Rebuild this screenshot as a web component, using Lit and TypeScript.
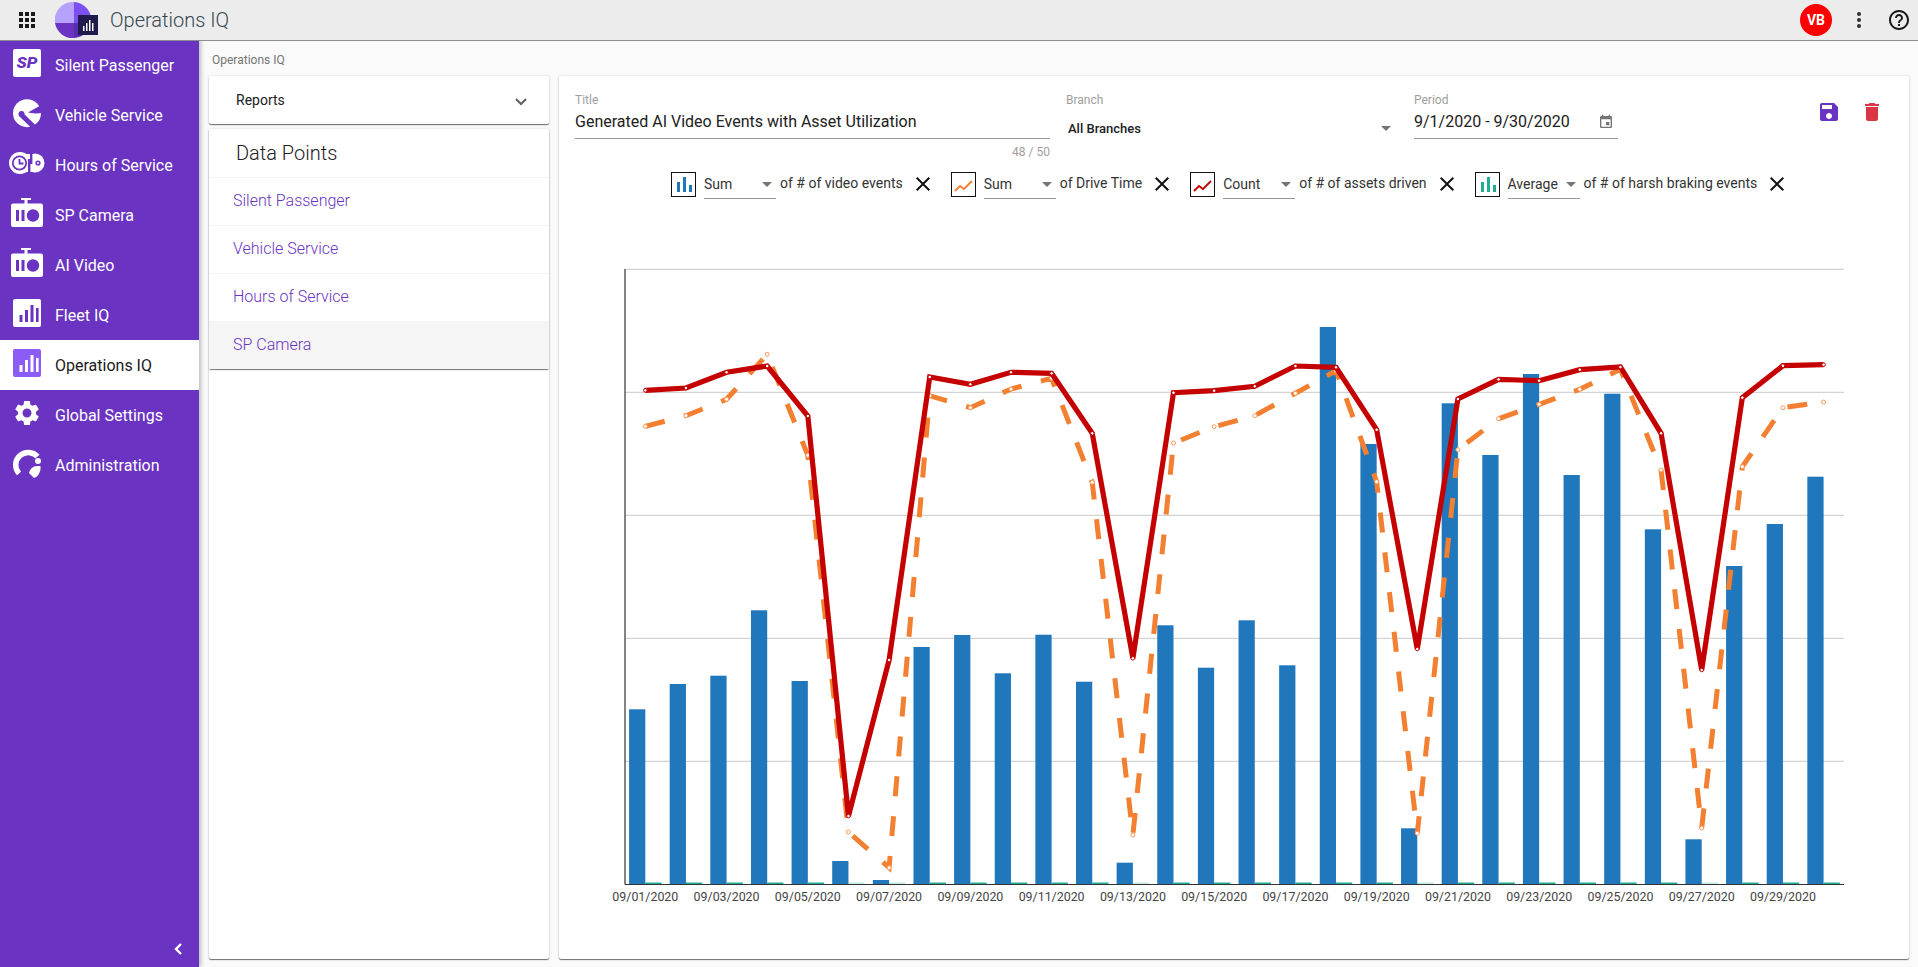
import { LitElement, html, css, svg } from "lit";
import { customElement } from "lit/decorators.js";

const P = {
  apps: "M4 8h4V4H4v4zm6 12h4v-4h-4v4zm-6 0h4v-4H4v4zm0-6h4v-4H4v4zm6 0h4v-4h-4v4zm6-10v4h4V4h-4zm-6 4h4V4h-4v4zm6 6h4v-4h-4v4zm0 6h4v-4h-4v4z",
  gear: "M19.14 12.94c.04-.3.06-.61.06-.94 0-.32-.02-.64-.07-.94l2.03-1.58c.18-.14.23-.41.12-.61l-1.92-3.32c-.12-.22-.37-.29-.59-.22l-2.39.96c-.5-.38-1.03-.7-1.62-.94l-.36-2.54c-.04-.24-.24-.41-.48-.41h-3.84c-.24 0-.43.17-.47.41l-.36 2.54c-.59.24-1.13.57-1.62.94l-2.39-.96c-.22-.08-.47 0-.59.22L2.74 8.87c-.12.21-.08.47.12.61l2.03 1.58c-.05.3-.09.63-.09.94s.02.64.07.94l-2.03 1.58c-.18.14-.23.41-.12.61l1.92 3.32c.12.22.37.29.59.22l2.39-.96c.5.38 1.03.7 1.62.94l.36 2.54c.05.24.24.41.48.41h3.84c.24 0 .44-.17.47-.41l.36-2.54c.59-.24 1.13-.56 1.62-.94l2.39.96c.22.08.47 0 .59-.22l1.92-3.32c.12-.22.07-.47-.12-.61l-2.01-1.58zM12 15.6c-1.98 0-3.6-1.62-3.6-3.6s1.62-3.6 3.6-3.6 3.6 1.62 3.6 3.6-1.62 3.6-3.6 3.6z",
  help: "M11 18h2v-2h-2v2zm1-16C6.48 2 2 6.48 2 12s4.48 10 10 10 10-4.48 10-10S17.52 2 12 2zm0 18c-4.41 0-8-3.59-8-8s3.59-8 8-8 8 3.59 8 8-3.59 8-8 8zm0-14c-2.21 0-4 1.79-4 4h2c0-1.1.9-2 2-2s2 .9 2 2c0 2-3 1.75-3 5h2c0-2.25 3-2.5 3-5 0-2.21-1.79-4-4-4z",
  save: "M17 3H5c-1.11 0-2 .9-2 2v14c0 1.1.89 2 2 2h14c1.1 0 2-.9 2-2V7l-4-4zm-5 16c-1.66 0-3-1.34-3-3s1.34-3 3-3 3 1.34 3 3-1.34 3-3 3zm3-10H5V5h10v4z",
  del: "M6 19c0 1.1.9 2 2 2h8c1.1 0 2-.9 2-2V7H6v12zM19 4h-3.5l-1-1h-5l-1 1H5v2h14V4z",
  cal: "M17 12h-5v5h5v-5zM16 1v2H8V1H6v2H5c-1.11 0-1.99.9-1.99 2L3 19c0 1.1.89 2 2 2h14c1.1 0 2-.9 2-2V5c0-1.1-.9-2-2-2h-1V1h-2zm3 18H5V8h14v11z",
  close: "M19 6.41L17.59 5 12 10.59 6.41 5 5 6.41 10.59 12 5 17.59 6.41 19 12 13.41 17.59 19 19 17.59 13.41 12z",
};

const cam = svg`<path class="w" d="M12 1h10v2h-3.500v3.500H32a2 2 0 0 1 2 2V28a2 2 0 0 1-2 2H4a2 2 0 0 1-2-2V8.500a2 2 0 0 1 2-2h11.500V3H12z"/>
  <rect class="p" x="7" y="13" width="3" height="11"/><rect class="p" x="12.500" y="13" width="3" height="11"/><circle class="p" cx="24" cy="18.500" r="6.200"/>`;
const bars = (c: string) => svg`<rect fill="${c}" x="10.500" y="18" width="3" height="7"/><rect fill="${c}" x="16" y="13" width="3" height="12"/><rect fill="${c}" x="21.500" y="8" width="3" height="17"/><rect fill="${c}" x="27" y="11" width="2.600" height="14"/>`;

const navIcons = [
  svg`<rect class="w" x="4" y="2" width="28" height="28" rx="2"/><text class="sp" x="18" y="21" text-anchor="middle" textLength="21" lengthAdjust="spacingAndGlyphs">SP</text>`,
  svg`<circle class="w" cx="18" cy="16.200" r="14"/><path class="ps" d="M12 17.500L26 31" stroke-width="5"/><path class="p" d="M19 15.500L34 7v9l-8 .5z"/><circle class="p" cx="12.500" cy="17" r="3"/>`,
  svg`<circle class="w" cx="11" cy="16" r="11"/><circle class="w" cx="26" cy="16" r="9.500"/><rect class="w" x="11" y="7" width="16" height="18"/><circle class="p" cx="10.500" cy="16" r="7.600"/><circle class="w" cx="10.500" cy="16" r="5.800"/><path class="ps" d="M10.500 12v4.500h4" stroke-width="1.800"/><rect class="p" x="21" y="6" width="2.400" height="11"/><rect class="p" x="19" y="12" width="2.400" height="13"/><circle class="p" cx="29" cy="16" r="2.600"/><circle class="w" cx="29" cy="16" r="1.100"/>`,
  cam,
  cam,
  svg`<rect class="w" x="4" y="2" width="28" height="28" rx="2"/>${bars("#6a33c2")}`,
  svg`<rect fill="#8b5cf6" x="4" y="2" width="28" height="28" rx="2"/>${bars("#ffffff")}`,
  svg`<g transform="translate(3 1) scale(1.25)"><path class="w" d="${P.gear}"/></g>`,
  svg`<path class="ws" stroke-width="5.500" d="M10 26.500A11.500 11.500 0 1 1 28.500 9.500"/><circle class="w" cx="29" cy="14" r="3"/><path class="w" d="M20 26c1-4 4-7 8-7h3.500c.5 4-1 8-3.500 10.500l-3 1.500-3-3z"/>`,
];

const nav = ["Silent Passenger", "Vehicle Service", "Hours of Service", "SP Camera", "AI Video", "Fleet IQ", "Operations IQ", "Global Settings", "Administration"];

const blue = [709.3, 684, 675.7, 610.3, 681, 861, 880, 647, 635, 673.3, 634.7, 681.7, 862.7, 625.3, 667.7, 620.3, 665.3, 327, 444, 828.3, 403.3, 455, 374, 475, 393.7, 529.3, 839.3, 566, 524, 476.7];
const red = [390.3, 388, 372.3, 366, 416, 816, 660, 377, 384.3, 372.3, 373.3, 433.3, 658.3, 392.7, 390.7, 386.3, 366, 367.3, 429.7, 649, 399, 379.3, 380.7, 369.7, 367, 433.3, 670, 397.7, 365.7, 364.7];
const orange = [426.3, 415.7, 399.3, 354.3, 455.3, 832, 867.7, 395.7, 407.7, 389, 378.3, 482.3, 835, 443, 426.7, 415.7, 393.3, 370.7, 481.7, 833.3, 449.7, 418.7, 404.3, 389.3, 369.3, 470, 828, 466.7, 407.7, 402];
const STEP = 40.63;
const X0 = 625;
const cx = (i: number) => X0 + STEP * (i + 0.5);
const weak = new Set([5, 6, 12, 19, 26]);
const grid = [269.3, 392.3, 515.3, 638.3, 761.3];
const pts = (a: number[]) => a.map((y, i) => `${cx(i).toFixed(2)},${y}`).join(" ");

const series = [
  { kind: "bar", color: "#2077bc", fn: "Sum", label: "of # of video events" },
  { kind: "line", color: "#f37f30", fn: "Sum", label: "of Drive Time" },
  { kind: "line", color: "#c40000", fn: "Count", label: "of # of assets driven" },
  { kind: "bar", color: "#1fae93", fn: "Average", label: "of # of harsh braking events" },
];

@customElement("app-root")
export class AppRoot extends LitElement {
  static styles = css`
    :host { display: block; width: 100%; height: 967px; overflow: hidden; font-family: Roboto, "Liberation Sans", sans-serif; background: #fafafa; }
    * { box-sizing: border-box; }
    .top { height: 40px; background: #ececec; box-shadow: 0 1px 0 #8e8e8e; display: flex; align-items: center; position: relative; z-index: 2; }
    .apps { width: 24px; height: 24px; margin-left: 15px; fill: #1a1a1a; }
    .logo { width: 44px; height: 40px; margin-left: 16px; flex: none; }
    .app-title { margin-left: 11px; font-weight: 300; font-size: 20px; color: #37474f; }
    .spacer { flex: 1; }
    .avatar { width: 32px; height: 32px; border-radius: 50%; background: #fe0000; color: #fff; font-size: 14px; font-weight: 700; display: flex; align-items: center; justify-content: center; }
    .more { width: 24px; height: 24px; margin-left: 15px; fill: #263238; }
    .help { width: 24px; height: 24px; margin-left: 16px; margin-right: 7px; fill: #1a1a1a; }
    .body { display: flex; height: 927px; }
    .side { width: 199px; flex: none; background: #6a33c2; box-shadow: 2px 0 4px rgba(0,0,0,.25); position: relative; z-index: 1; }
    .nav { height: 50px; display: flex; align-items: center; padding-left: 9px; color: #fff; font-weight: 400; font-size: 16px; }
    .nav svg { width: 36px; height: 36px; margin-right: 10px; flex: none; }
    .nav.on { background: #fff; color: #1a1a1a; }
    .w { fill: #fff; } .p { fill: #6a33c2; }
    .ps { fill: none; stroke: #6a33c2; } .ws { fill: none; stroke: #fff; }
    .sp { fill: #6a33c2; font: italic 900 14px Roboto, sans-serif; }
    .collapse { position: absolute; right: 15px; bottom: 10px; width: 12px; height: 16px; fill: none; stroke: #fff; stroke-width: 2.4; }
    .main { flex: 1; padding: 0 9px 8px 10px; display: flex; flex-direction: column; min-width: 0; }
    .crumb { height: 36px; padding: 13px 3px 0; font-size: 12px; line-height: 14px; color: #757575; }
    .cols { flex: 1; display: flex; gap: 10px; min-height: 0; }
    .left { width: 340px; flex: none; display: flex; flex-direction: column; gap: 5px; }
    .card { background: #fff; border-radius: 2px; box-shadow: 0 1px 1px rgba(0,0,0,.55), 0 0 3px rgba(0,0,0,.12); }
    .reports { height: 48px; display: flex; align-items: center; justify-content: space-between; padding: 0 21px 0 27px; font-size: 14px; color: #212121; }
    .reports svg { width: 14px; height: 10px; fill: none; stroke: #616161; stroke-width: 2; margin-top: 4px; }
    .data { flex: 1; }
    .list { box-shadow: 0 1px 1px rgba(0,0,0,.55); border-radius: 2px; }
    .dp { height: 48px; padding-left: 27px; font-size: 20px; font-weight: 300; line-height: 48px; color: #212121; }
    .item { height: 48px; padding-left: 24px; font-size: 16px; font-weight: 300; line-height: 46px; color: #6a33c2; border-top: 1px solid #f5f5f5; }
    .item.sel { background: #f5f5f5; height: 48px; }
    .chart-card { flex: 1; min-width: 0; display: flex; flex-direction: column; }
    .form { display: flex; gap: 16px; padding: 16px 25px 0 16px; height: 83px; }
    .lab { font-size: 12px; line-height: 14px; height: 14px; padding-top: 1px; color: #9e9e9e; box-sizing: content-box; margin-bottom: -1px; }
    .val { height: 33px; line-height: 32px; font-size: 16px; color: #212121; border-bottom: 1px solid #949494; display: flex; justify-content: space-between; align-items: center; }
    .f-title { width: 475px; } .f-branch { width: 332px; } .f-period { width: 204px; }
    .count { margin-top: 6px; text-align: right; font-size: 12px; line-height: 14px; color: #9e9e9e; }
    .branch { border: 0; font-size: 13px; font-weight: 500; padding: 12px 0 0 2px; }
    .arrow { width: 0; height: 0; border-left: 5px solid transparent; border-right: 5px solid transparent; border-top: 5px solid #757575; flex: none; }
    .branch .arrow { margin-right: 7px; }
    .cal { width: 16px; height: 16px; fill: #757575; margin-right: 4px; }
    .actions { margin-left: auto; display: flex; gap: 19px; padding-top: 8px; }
    .actions svg { width: 24px; height: 24px; }
    .save { fill: #6a33c2; } .del { fill: #dc3545; }
    .series { display: flex; padding: 13px 0 0 112px; height: 40px; font-size: 14px; color: #333; }
    .s { display: flex; margin-right: 16px; }
    .box { width: 25px; height: 25px; border: 1px solid #111; flex: none; }
    .box svg { display: block; width: 23px; height: 23px; }
    .sel-fn { width: 72px; height: 27px; margin-left: 8px; border-bottom: 1px solid #949494; display: flex; align-items: center; justify-content: space-between; padding: 0 4px 2px 0; }
    .lbl { margin-left: 4px; line-height: 23px; white-space: nowrap; }
    .x { width: 24px; height: 24px; margin-left: 8px; fill: #111; }
    .plot { display: block; width: 1350px; height: 749px; }
    .grid { stroke: #c8c8c8; stroke-width: 1; }
    .axis { stroke: #333; stroke-width: 1.2; }
    .bar-b { fill: #2077bc; }
    .bar-g { fill: #1fae93; }
    .bar-g.weak { opacity: .25; }
    .tick { font: 12.4px Roboto, sans-serif; fill: #444; text-anchor: middle; }
    .l-red { fill: none; stroke: #c40000; stroke-width: 5.2; stroke-linejoin: miter; }
    .l-or { fill: none; stroke: #f37f30; stroke-width: 5; stroke-dasharray: 20 20; }
    .m-red { fill: #fff; stroke: #c40000; stroke-width: 1; }
    .m-or { fill: #fff; stroke: #f79a5c; stroke-width: 1; }
  `;

  private chip(s: (typeof series)[number]) {
    const icon = s.kind === "bar"
      ? svg`<rect fill="${s.color}" x="5" y="9" width="3" height="10"/><rect fill="${s.color}" x="11" y="4" width="3" height="15"/><rect fill="${s.color}" x="17" y="12" width="3" height="7"/>`
      : svg`<path fill="none" stroke="${s.color}" stroke-width="1.800" d="M3 18l5-5 4 3 8-8"/>`;
    return html`<div class="s">
      <div class="box"><svg viewBox="0 0 23 23">${icon}</svg></div>
      <div class="sel-fn"><span>${s.fn}</span><span class="arrow"></span></div>
      <span class="lbl">${s.label}</span>
      <svg class="x" viewBox="0 0 24 24"><path d="${P.close}"/></svg>
    </div>`;
  }

  render() {
    return html`
      <div class="top">
        <svg class="apps" viewBox="0 0 24 24"><path d="${P.apps}"/></svg>
        <svg class="logo" viewBox="55 0 44 40">
          <path fill="#b7a2fb" d="M74 2A18 18 0 0 0 55 23h19z"/>
          <path fill="#7c4ff0" d="M74 2a18 18 0 0 1 17 21H74z"/>
          <path fill="#6a33c2" d="M55 23a18 18 0 0 0 19 15V23z"/>
          <path fill="#5b2bb0" d="M74 23h17a18 18 0 0 1-17 15z"/>
          <rect fill="#1f1b4d" x="78" y="15" width="20" height="20"/>
          <g fill="#fff"><rect x="83" y="26" width="1.500" height="5"/><rect x="86" y="23" width="1.500" height="8"/><rect x="89" y="20" width="1.500" height="11"/><rect x="92" y="23" width="1.500" height="8"/></g>
        </svg>
        <span class="app-title">Operations IQ</span>
        <span class="spacer"></span>
        <div class="avatar">VB</div>
        <svg class="more" viewBox="0 0 24 24"><circle cx="12" cy="6" r="2"/><circle cx="12" cy="12" r="2"/><circle cx="12" cy="18" r="2"/></svg>
        <svg class="help" viewBox="0 0 24 24"><path d="${P.help}"/></svg>
      </div>
      <div class="body">
        <aside class="side">
          ${nav.map((n, i) => html`<div class="nav ${i === 6 ? "on" : ""}"><svg viewBox="0 0 36 36">${navIcons[i]}</svg><span>${n}</span></div>`)}
          <svg class="collapse" viewBox="0 0 12 16"><path d="M9 3L4 8l5 5"/></svg>
        </aside>
        <main class="main">
          <div class="crumb">Operations IQ</div>
          <div class="cols">
            <div class="left">
              <div class="card reports"><span>Reports</span><svg viewBox="0 0 14 10"><path d="M2 2l5 5 5-5"/></svg></div>
              <div class="card data">
                <div class="list">
                  <div class="dp">Data Points</div>
                  <div class="item">Silent Passenger</div>
                  <div class="item">Vehicle Service</div>
                  <div class="item">Hours of Service</div>
                  <div class="item sel">SP Camera</div>
                </div>
              </div>
            </div>
            <section class="card chart-card">
              <div class="form">
                <div class="f-title">
                  <div class="lab">Title</div>
                  <div class="val">Generated AI Video Events with Asset Utilization</div>
                  <div class="count">48 / 50</div>
                </div>
                <div class="f-branch">
                  <div class="lab">Branch</div>
                  <div class="val branch"><span>All Branches</span><span class="arrow"></span></div>
                </div>
                <div class="f-period">
                  <div class="lab">Period</div>
                  <div class="val"><span>9/1/2020 - 9/30/2020</span><svg class="cal" viewBox="0 0 24 24"><path d="${P.cal}"/></svg></div>
                </div>
                <div class="actions">
                  <svg class="save" viewBox="0 0 24 24"><path d="${P.save}"/></svg>
                  <svg class="del" viewBox="0 0 24 24"><path d="${P.del}"/></svg>
                </div>
              </div>
              <div class="series">${series.map((s) => this.chip(s))}</div>
              <svg class="plot" viewBox="559 199 1350 749">
                ${grid.map((y) => svg`<line class="grid" x1="${X0}" x2="1843.8" y1="${y}" y2="${y}"/>`)}
                ${blue.map((y, i) => svg`<rect class="bar-b" x="${cx(i) - 16.25}" y="${y}" width="16.25" height="${884 - y}"/>`)}
                <line class="axis" x1="${X0}" x2="${X0}" y1="269" y2="884.500"/>
                <line class="axis" x1="${X0}" x2="1844" y1="884.500" y2="884.500"/>
                ${blue.map((_, i) => svg`<rect class="bar-g ${weak.has(i) ? "weak" : ""}" x="${cx(i)}" y="882.500" width="16.25" height="1.500"/>`)}
                <polyline class="l-or" points="${pts(orange)}"/>
                ${orange.map((y, i) => svg`<circle class="m-or" cx="${cx(i)}" cy="${y}" r="2"/>`)}
                <polyline class="l-red" points="${pts(red)}"/>
                ${red.map((y, i) => svg`<circle class="m-red" cx="${cx(i)}" cy="${y}" r="1.800"/>`)}
                ${blue.map((_, i) => i % 2 === 0 ? svg`<text class="tick" x="${cx(i)}" y="901">09/${String(i + 1).padStart(2, "0")}/2020</text>` : "")}
              </svg>
            </section>
          </div>
        </main>
      </div>
    `;
  }
}
